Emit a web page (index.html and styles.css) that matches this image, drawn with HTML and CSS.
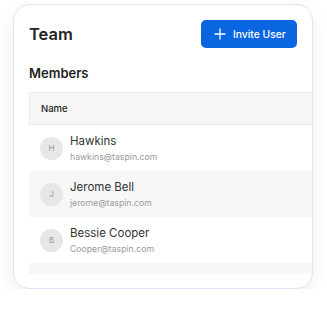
FILE: index.html
```html
<!DOCTYPE html>
<html>
<head>
    <title>Team</title>
    <link rel="stylesheet" href="styles.css">
</head>
<body>
    <div class="card">
        <div class="card-head">
            <h1 class="title">Team</h1>
            <button class="invite-btn">
                <svg width="12" height="12" viewBox="0 0 12 12"><path d="M6 1v10M1 6h10" stroke="#fff" stroke-width="1.3" stroke-linecap="round"/></svg>
                Invite User
            </button>
        </div>
        <h2 class="subtitle">Members</h2>
        <div class="table-wrap">
            <div class="table-head">Name</div>
            <div class="row">
                <div class="avatar">H</div>
                <div class="who">
                    <div class="name">Hawkins</div>
                    <div class="email">hawkins@taspin.com</div>
                </div>
            </div>
            <div class="row striped">
                <div class="avatar">J</div>
                <div class="who">
                    <div class="name">Jerome Bell</div>
                    <div class="email">jerome@taspin.com</div>
                </div>
            </div>
            <div class="row">
                <div class="avatar">B</div>
                <div class="who">
                    <div class="name">Bessie Cooper</div>
                    <div class="email">Cooper@taspin.com</div>
                </div>
            </div>
            <div class="row striped"></div>
        </div>
    </div>
</body>
</html>
```

FILE: styles.css
```css
body {
    margin: 0;
    background: #ffffff;
    font-family: Inter, 'Noto Sans', sans-serif;
    color: #222222;
}

.card {
    margin: 4px 0 0 13px;
    width: 300px;
    height: 285px;
    box-sizing: border-box;
    border: 1px solid #e3e3f7;
    border-radius: 16px;
    background: #ffffff;
    box-shadow: 0 8px 20px rgba(40, 40, 90, 0.07);
    padding: 15px 0 15px 15px;
    overflow: hidden;
}

.card-head {
    display: flex;
    justify-content: space-between;
    align-items: center;
    padding-right: 15px;
}

.title {
    margin: 0;
    font-size: 16.5px;
    font-weight: 600;
    color: #222222;
}

.invite-btn {
    display: flex;
    align-items: center;
    gap: 7px;
    height: 28px;
    width: 96px;
    padding: 0 0 0 13px;
    border: none;
    border-radius: 5px;
    background: #0a66e0;
    color: #ffffff;
    font-family: inherit;
    font-size: 10.3px;
    font-weight: 500;
}

.subtitle {
    margin: 17px 0 0;
    font-size: 13px;
    font-weight: 600;
    line-height: 17px;
    color: #222222;
}

.table-wrap {
    margin-top: 10px;
    height: 182px;
    overflow: hidden;
}

.table-head {
    height: 33px;
    box-sizing: border-box;
    border: 1px solid #ececec;
    border-right: none;
    background: #f6f6f6;
    padding-left: 11px;
    display: flex;
    align-items: center;
    font-size: 9.5px;
    font-weight: 500;
    color: #222222;
}

.row {
    height: 46px;
    display: flex;
    align-items: center;
    gap: 7px;
    padding-left: 11px;
}

.striped {
    background: #f7f7f7;
}

.avatar {
    width: 23px;
    height: 23px;
    border-radius: 50%;
    background: #e7e7e7;
    color: #9a9a9a;
    font-size: 8px;
    display: flex;
    align-items: center;
    justify-content: center;
}

.name {
    font-size: 11.5px;
    color: #333333;
    line-height: 15px;
}

.email {
    font-size: 8.7px;
    color: #9a9a9a;
    line-height: 12px;
    margin-top: 2px;
}
```
